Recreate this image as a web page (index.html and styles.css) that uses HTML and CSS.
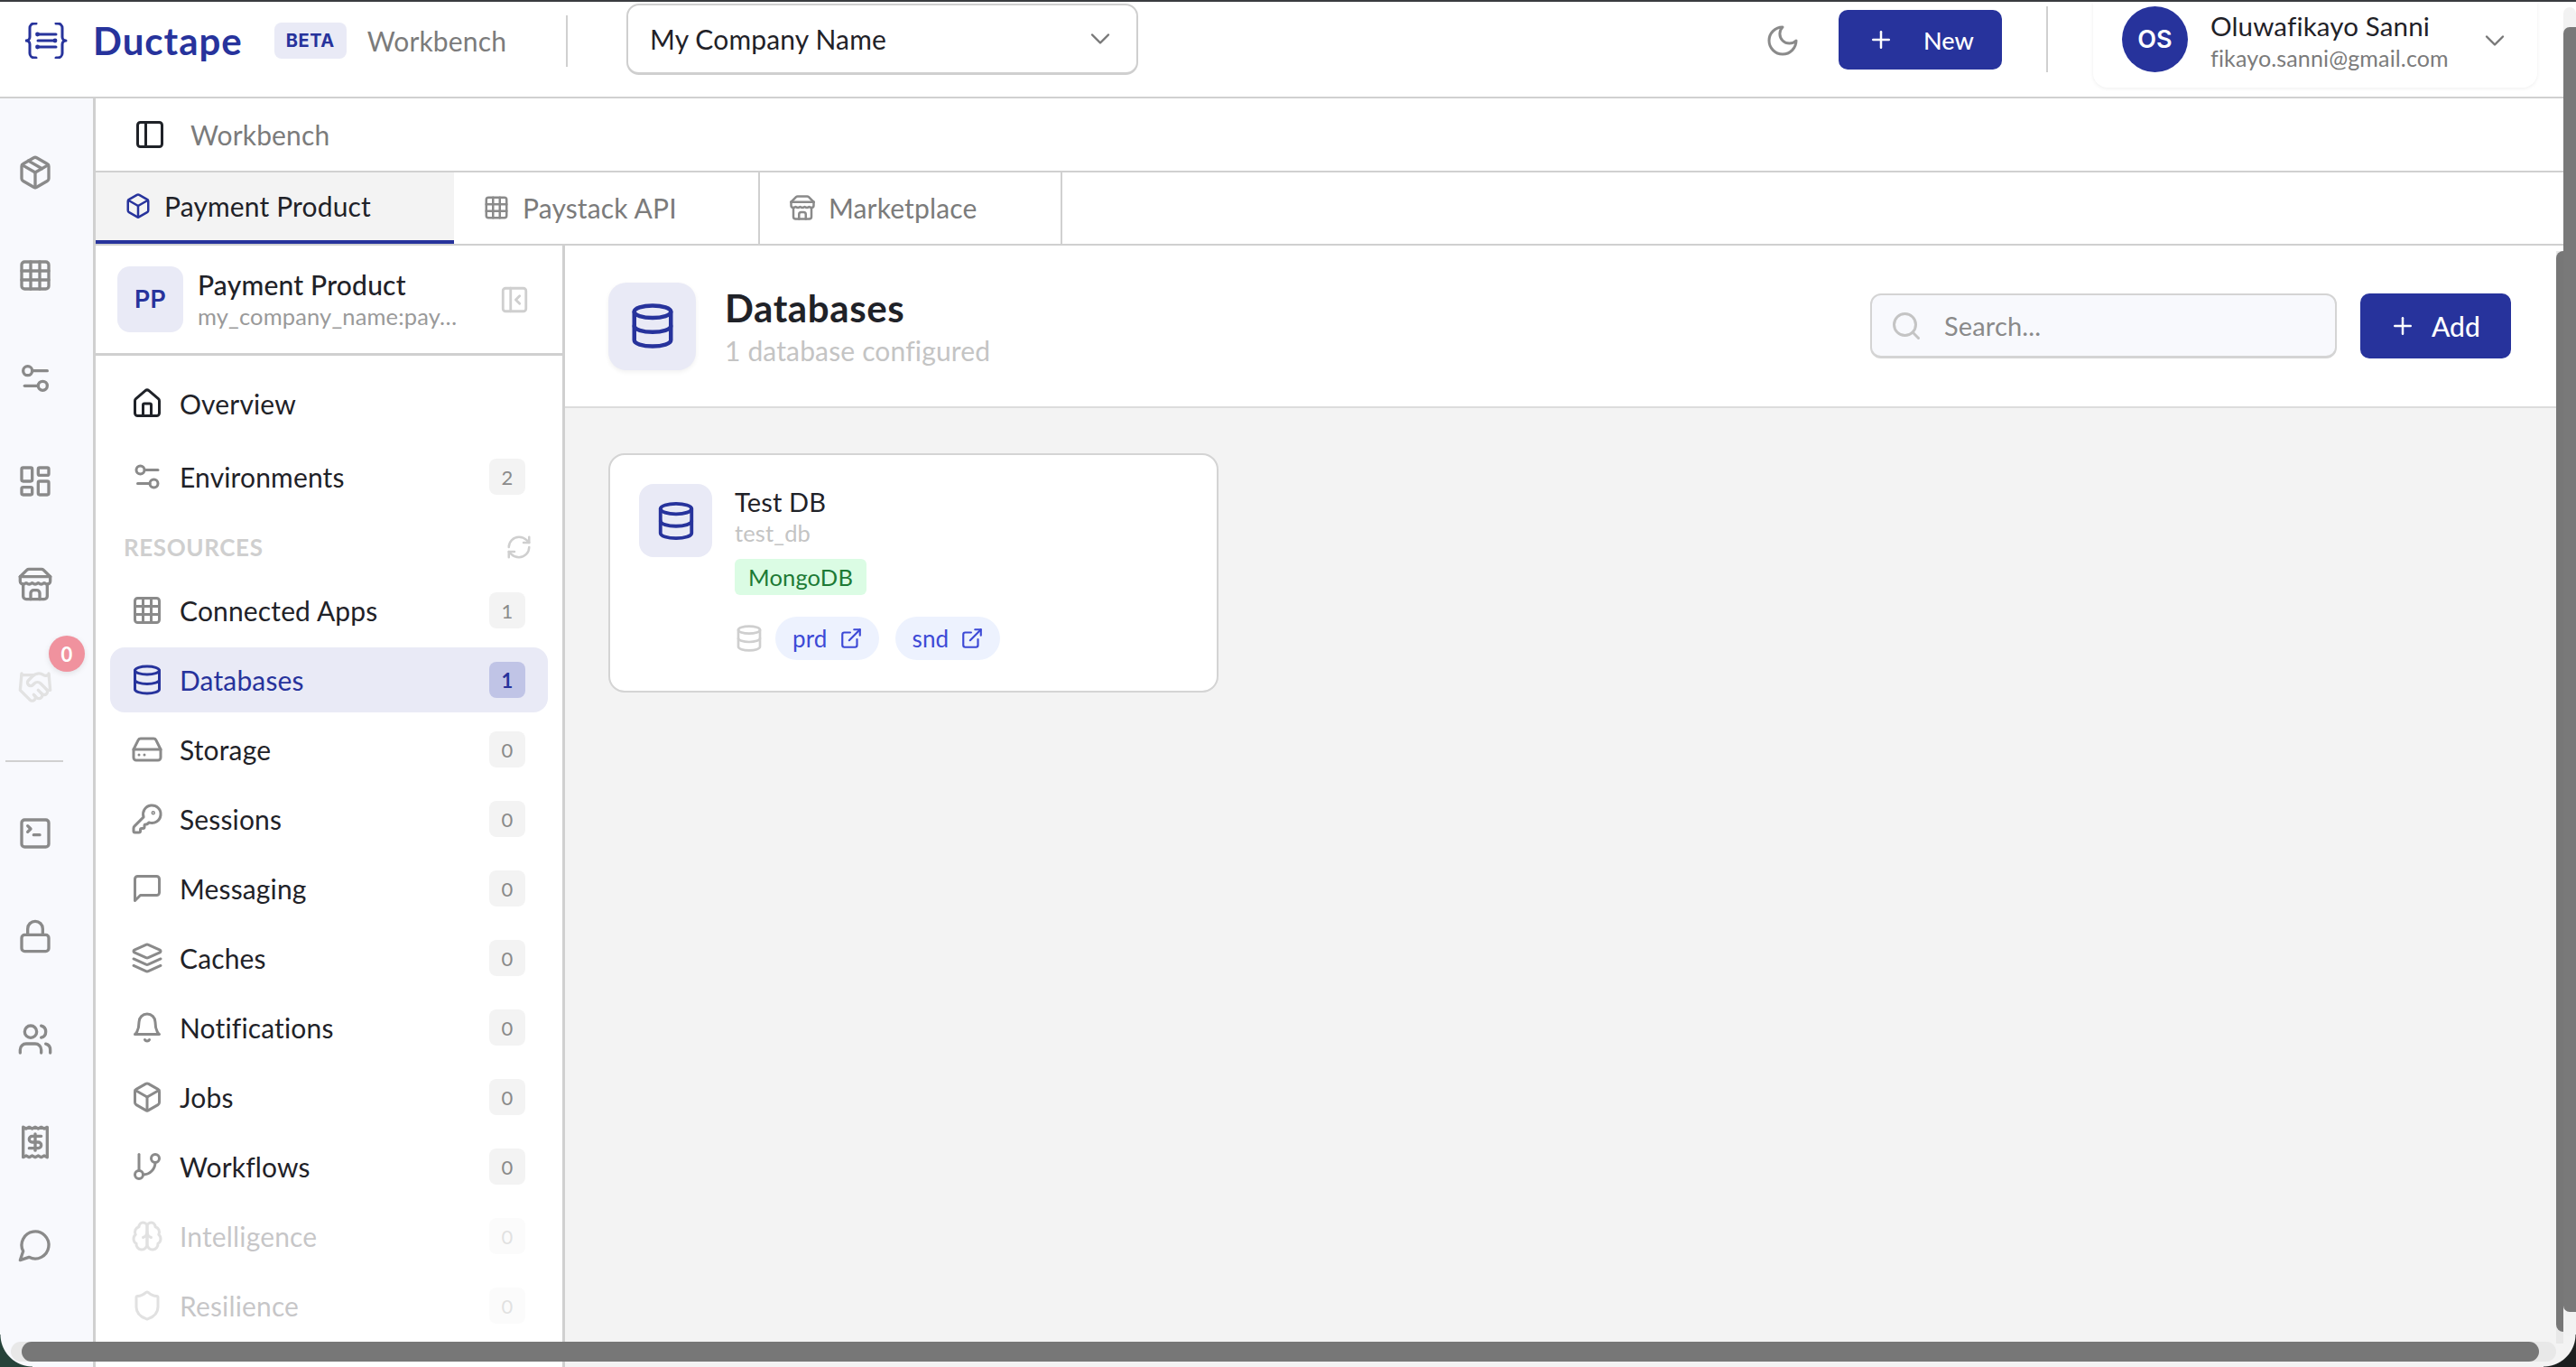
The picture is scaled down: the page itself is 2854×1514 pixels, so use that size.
FILE: index.html
```html
<!DOCTYPE html>
<html lang="en">
<head>
    <meta charset="UTF-8">
    <meta name="viewport" content="width=device-width, initial-scale=1.0">
    <title>Ductape Workbench</title>
    <link rel="stylesheet" href="styles.css">
</head>
<body>
    <svg class="sprite" xmlns="http://www.w3.org/2000/svg">
        <symbol id="i-package" viewBox="0 0 24 24"><path d="M21 8a2 2 0 0 0-1-1.73l-7-4a2 2 0 0 0-2 0l-7 4A2 2 0 0 0 3 8v8a2 2 0 0 0 1 1.73l7 4a2 2 0 0 0 2 0l7-4A2 2 0 0 0 21 16Z"/><path d="m3.3 7 8.7 5 8.7-5"/><path d="M12 22V12"/><path d="m7.5 4.27 9 5.15"/></symbol>
        <symbol id="i-box" viewBox="0 0 24 24"><path d="M21 8a2 2 0 0 0-1-1.73l-7-4a2 2 0 0 0-2 0l-7 4A2 2 0 0 0 3 8v8a2 2 0 0 0 1 1.73l7 4a2 2 0 0 0 2 0l7-4A2 2 0 0 0 21 16Z"/><path d="m3.3 7 8.7 5 8.7-5"/><path d="M12 22V12"/></symbol>
        <symbol id="i-grid" viewBox="0 0 24 24"><rect x="3" y="3" width="18" height="18" rx="2"/><path d="M3 9h18M3 15h18M9 3v18M15 3v18"/></symbol>
        <symbol id="i-sliders" viewBox="0 0 24 24"><path d="M20 7h-9"/><path d="M14 17H5"/><circle cx="17" cy="17" r="3"/><circle cx="7" cy="7" r="3"/></symbol>
        <symbol id="i-dash" viewBox="0 0 24 24"><rect x="3" y="3" width="7" height="9" rx="1"/><rect x="14" y="3" width="7" height="5" rx="1"/><rect x="14" y="12" width="7" height="9" rx="1"/><rect x="3" y="16" width="7" height="5" rx="1"/></symbol>
        <symbol id="i-store" viewBox="0 0 24 24"><path d="m2 7 4.41-4.41A2 2 0 0 1 7.83 2h8.34a2 2 0 0 1 1.42.59L22 7"/><path d="M4 12v8a2 2 0 0 0 2 2h12a2 2 0 0 0 2-2v-8"/><path d="M15 22v-4a2 2 0 0 0-2-2h-2a2 2 0 0 0-2 2v4"/><path d="M2 7h20"/><path d="M22 7v3a2 2 0 0 1-2 2a2.7 2.7 0 0 1-1.59-.63.7.7 0 0 0-.82 0A2.7 2.7 0 0 1 16 12a2.7 2.7 0 0 1-1.59-.63.7.7 0 0 0-.82 0A2.7 2.7 0 0 1 12 12a2.7 2.7 0 0 1-1.59-.63.7.7 0 0 0-.82 0A2.7 2.7 0 0 1 8 12a2.7 2.7 0 0 1-1.59-.63.7.7 0 0 0-.82 0A2.7 2.7 0 0 1 4 12a2 2 0 0 1-2-2V7"/></symbol>
        <symbol id="i-hand" viewBox="0 0 24 24"><path d="m11 17 2 2a1 1 0 1 0 3-3"/><path d="m14 14 2.5 2.5a1 1 0 1 0 3-3l-3.88-3.88a3 3 0 0 0-4.24 0l-.88.88a1 1 0 1 1-3-3l2.81-2.81a5.79 5.79 0 0 1 7.06-.87l.47.28a2 2 0 0 0 1.42.25L21 4"/><path d="m21 3 1 11h-2"/><path d="M3 3 2 14l6.5 6.5a1 1 0 1 0 3-3"/><path d="M3 4h8"/></symbol>
        <symbol id="i-term" viewBox="0 0 24 24"><path d="m7 11 2-2-2-2"/><path d="M11 13h4"/><rect x="3" y="3" width="18" height="18" rx="2"/></symbol>
        <symbol id="i-lock" viewBox="0 0 24 24"><rect x="3" y="11" width="18" height="11" rx="2"/><path d="M7 11V7a5 5 0 0 1 10 0v4"/></symbol>
        <symbol id="i-users" viewBox="0 0 24 24"><path d="M16 21v-2a4 4 0 0 0-4-4H6a4 4 0 0 0-4 4v2"/><circle cx="9" cy="7" r="4"/><path d="M22 21v-2a4 4 0 0 0-3-3.87"/><path d="M16 3.13a4 4 0 0 1 0 7.75"/></symbol>
        <symbol id="i-receipt" viewBox="0 0 24 24"><path d="M4 2v20l2-1 2 1 2-1 2 1 2-1 2 1 2-1 2 1V2l-2 1-2-1-2 1-2-1-2 1-2-1-2 1Z"/><path d="M16 8h-6a2 2 0 1 0 0 4h4a2 2 0 1 1 0 4H8"/><path d="M12 17.5v-11"/></symbol>
        <symbol id="i-chat" viewBox="0 0 24 24"><path d="M7.9 20A9 9 0 1 0 4 16.1L2 22Z"/></symbol>
        <symbol id="i-home" viewBox="0 0 24 24"><path d="M15 21v-8a1 1 0 0 0-1-1h-4a1 1 0 0 0-1 1v8"/><path d="M3 10a2 2 0 0 1 .709-1.528l7-5.999a2 2 0 0 1 2.582 0l7 5.999A2 2 0 0 1 21 10v9a2 2 0 0 1-2 2H5a2 2 0 0 1-2-2z"/></symbol>
        <symbol id="i-db" viewBox="0 0 24 24"><ellipse cx="12" cy="5" rx="9" ry="3"/><path d="M3 5V19A9 3 0 0 0 21 19V5"/><path d="M3 12A9 3 0 0 0 21 12"/></symbol>
        <symbol id="i-drive" viewBox="0 0 24 24"><path d="M22 12H2"/><path d="M5.45 5.11 2 12v6a2 2 0 0 0 2 2h16a2 2 0 0 0 2-2v-6l-3.45-6.89A2 2 0 0 0 16.76 4H7.24a2 2 0 0 0-1.79 1.11z"/><path d="M6 16h.01"/><path d="M10 16h.01"/></symbol>
        <symbol id="i-key" viewBox="0 0 24 24"><path d="M2.586 17.414A2 2 0 0 0 2 18.828V21a1 1 0 0 0 1 1h3a1 1 0 0 0 1-1v-1a1 1 0 0 1 1-1h1a1 1 0 0 0 1-1v-1a1 1 0 0 1 1-1h.172a2 2 0 0 0 1.414-.586l.814-.814a6.5 6.5 0 1 0-4-4z"/><circle cx="16.5" cy="7.5" r=".5"/></symbol>
        <symbol id="i-msg" viewBox="0 0 24 24"><path d="M21 15a2 2 0 0 1-2 2H7l-4 4V5a2 2 0 0 1 2-2h14a2 2 0 0 1 2 2z"/></symbol>
        <symbol id="i-layers" viewBox="0 0 24 24"><path d="m12.83 2.18a2 2 0 0 0-1.66 0L2.6 6.08a1 1 0 0 0 0 1.83l8.58 3.91a2 2 0 0 0 1.66 0l8.58-3.9a1 1 0 0 0 0-1.83Z"/><path d="m22 17.65-9.17 4.16a2 2 0 0 1-1.66 0L2 17.65"/><path d="m22 12.65-9.17 4.16a2 2 0 0 1-1.66 0L2 12.65"/></symbol>
        <symbol id="i-bell" viewBox="0 0 24 24"><path d="M6 8a6 6 0 0 1 12 0c0 7 3 9 3 9H3s3-2 3-9"/><path d="M10.3 21a1.94 1.94 0 0 0 3.4 0"/></symbol>
        <symbol id="i-branch" viewBox="0 0 24 24"><path d="M6 3v12"/><circle cx="18" cy="6" r="3"/><circle cx="6" cy="18" r="3"/><path d="M18 9a9 9 0 0 1-9 9"/></symbol>
        <symbol id="i-brain" viewBox="0 0 24 24"><path d="M12 5a3 3 0 1 0-5.997.125 4 4 0 0 0-2.526 5.77 4 4 0 0 0 .556 6.588A4 4 0 1 0 12 18Z"/><path d="M12 5a3 3 0 1 1 5.997.125 4 4 0 0 1 2.526 5.77 4 4 0 0 1-.556 6.588A4 4 0 1 1 12 18Z"/><path d="M15 13a4.5 4.5 0 0 1-3-4 4.5 4.5 0 0 1-3 4"/></symbol>
        <symbol id="i-shield" viewBox="0 0 24 24"><path d="M20 13c0 5-3.5 7.5-7.66 8.95a1 1 0 0 1-.67-.01C7.5 20.5 4 18 4 13V6a1 1 0 0 1 1-1c2 0 4.5-1.2 6.24-2.72a1.17 1.17 0 0 1 1.52 0C14.51 3.81 17 5 19 5a1 1 0 0 1 1 1z"/></symbol>
        <symbol id="i-refresh" viewBox="0 0 24 24"><path d="M3 12a9 9 0 0 1 9-9 9.75 9.75 0 0 1 6.74 2.74L21 8"/><path d="M21 3v5h-5"/><path d="M21 12a9 9 0 0 1-9 9 9.75 9.75 0 0 1-6.74-2.74L3 16"/><path d="M8 16H3v5"/></symbol>
        <symbol id="i-panel" viewBox="0 0 24 24"><rect x="3" y="3" width="18" height="18" rx="2"/><path d="M9 3v18"/></symbol>
        <symbol id="i-panel-close" viewBox="0 0 24 24"><rect x="3" y="3" width="18" height="18" rx="2"/><path d="M9 3v18"/><path d="m16 15-3-3 3-3"/></symbol>
        <symbol id="i-moon" viewBox="0 0 24 24"><path d="M12 3a6 6 0 0 0 9 9 9 9 0 1 1-9-9Z"/></symbol>
        <symbol id="i-link" viewBox="0 0 24 24"><path d="M15 3h6v6"/><path d="M10 14 21 3"/><path d="M18 13v6a2 2 0 0 1-2 2H5a2 2 0 0 1-2-2V8a2 2 0 0 1 2-2h6"/></symbol>
        <symbol id="i-search" viewBox="0 0 24 24"><circle cx="11" cy="11" r="8"/><path d="m21 21-4.3-4.3"/></symbol>
        <symbol id="i-plus" viewBox="0 0 24 24"><path d="M5 12h14"/><path d="M12 5v14"/></symbol>
        <symbol id="i-chevron" viewBox="0 0 24 24"><path d="m6 9 6 6 6-6"/></symbol>
        <symbol id="i-logo" viewBox="0 0 47 40"><path d="M12 1h-2a5 5 0 0 0-5 5v10a4 4 0 0 1-4 4 4 4 0 0 1 4 4v10a5 5 0 0 0 5 5h2"/><path d="M34 1h2a5 5 0 0 1 5 5v10a4 4 0 0 0 4 4 4 4 0 0 0-4 4v10a5 5 0 0 1-5 5h-2"/><path d="M14 13h20M14 20h19M14 27h20"/><circle class="logo-dot" cx="13.5" cy="13" r="2.4"/><circle class="logo-dot" cx="33" cy="20" r="2.4"/><circle class="logo-dot" cx="13.5" cy="27" r="2.4"/></symbol>
    </svg>

    <div class="app">
        <header class="topbar">
            <div class="brand">
                <svg class="brand-logo"><use href="#i-logo"/></svg>
                <span class="brand-name">Ductape</span>
                <span class="beta">BETA</span>
                <span class="brand-sub">Workbench</span>
            </div>
            <div class="top-divider"></div>
            <div class="company-select">
                <span>My Company Name</span>
                <svg class="icon chevron"><use href="#i-chevron"/></svg>
            </div>
            <div class="top-right">
                <svg class="icon moon"><use href="#i-moon"/></svg>
                <button class="btn btn-new"><svg class="icon"><use href="#i-plus"/></svg>New</button>
                <div class="top-divider second"></div>
                <div class="user-card">
                    <div class="avatar">OS</div>
                    <div class="user-info">
                        <div class="user-name">Oluwafikayo Sanni</div>
                        <div class="user-mail">fikayo.sanni@gmail.com</div>
                    </div>
                    <svg class="icon chevron"><use href="#i-chevron"/></svg>
                </div>
            </div>
        </header>

        <div class="shell">
            <nav class="rail">
                <a class="rail-item"><svg class="icon"><use href="#i-package"/></svg></a>
                <a class="rail-item"><svg class="icon"><use href="#i-grid"/></svg></a>
                <a class="rail-item"><svg class="icon"><use href="#i-sliders"/></svg></a>
                <a class="rail-item"><svg class="icon"><use href="#i-dash"/></svg></a>
                <a class="rail-item"><svg class="icon"><use href="#i-store"/></svg></a>
                <a class="rail-item faded"><svg class="icon"><use href="#i-hand"/></svg><span class="rail-badge">0</span></a>
                <div class="rail-divider"></div>
                <a class="rail-item"><svg class="icon"><use href="#i-term"/></svg></a>
                <a class="rail-item"><svg class="icon"><use href="#i-lock"/></svg></a>
                <a class="rail-item"><svg class="icon"><use href="#i-users"/></svg></a>
                <a class="rail-item"><svg class="icon"><use href="#i-receipt"/></svg></a>
                <a class="rail-item"><svg class="icon"><use href="#i-chat"/></svg></a>
            </nav>

            <div class="workspace">
                <div class="crumb">
                    <svg class="icon"><use href="#i-panel"/></svg>
                    <span>Workbench</span>
                </div>
                <div class="tabs">
                    <div class="tab active"><svg class="icon"><use href="#i-box"/></svg>Payment Product</div>
                    <div class="tab second"><svg class="icon"><use href="#i-grid"/></svg>Paystack API</div>
                    <div class="tab third"><svg class="icon"><use href="#i-store"/></svg>Marketplace</div>
                </div>
                <div class="columns">
                    <aside class="sidebar">
                        <div class="side-head">
                            <div class="side-logo">PP</div>
                            <div class="side-title">
                                <div class="side-name">Payment Product</div>
                                <div class="side-slug">my_company_name:pay…</div>
                            </div>
                            <svg class="icon side-collapse"><use href="#i-panel-close"/></svg>
                        </div>
                        <ul class="side-list">
                            <li class="side-item first"><svg class="icon dark"><use href="#i-home"/></svg><span>Overview</span></li>
                            <li class="side-item"><svg class="icon"><use href="#i-sliders"/></svg><span>Environments</span><b class="count">2</b></li>
                            <li class="side-label"><span>RESOURCES</span><svg class="icon"><use href="#i-refresh"/></svg></li>
                            <li class="side-item"><svg class="icon"><use href="#i-grid"/></svg><span>Connected Apps</span><b class="count">1</b></li>
                            <li class="side-item active"><svg class="icon"><use href="#i-db"/></svg><span>Databases</span><b class="count">1</b></li>
                            <li class="side-item"><svg class="icon"><use href="#i-drive"/></svg><span>Storage</span><b class="count">0</b></li>
                            <li class="side-item"><svg class="icon"><use href="#i-key"/></svg><span>Sessions</span><b class="count">0</b></li>
                            <li class="side-item"><svg class="icon"><use href="#i-msg"/></svg><span>Messaging</span><b class="count">0</b></li>
                            <li class="side-item"><svg class="icon"><use href="#i-layers"/></svg><span>Caches</span><b class="count">0</b></li>
                            <li class="side-item"><svg class="icon"><use href="#i-bell"/></svg><span>Notifications</span><b class="count">0</b></li>
                            <li class="side-item"><svg class="icon"><use href="#i-box"/></svg><span>Jobs</span><b class="count">0</b></li>
                            <li class="side-item"><svg class="icon"><use href="#i-branch"/></svg><span>Workflows</span><b class="count">0</b></li>
                            <li class="side-item disabled"><svg class="icon"><use href="#i-brain"/></svg><span>Intelligence</span><b class="count">0</b></li>
                            <li class="side-item disabled"><svg class="icon"><use href="#i-shield"/></svg><span>Resilience</span><b class="count">0</b></li>
                        </ul>
                    </aside>

                    <main class="content">
                        <div class="content-head">
                            <div class="head-icon"><svg class="icon"><use href="#i-db"/></svg></div>
                            <div class="head-text">
                                <h1>Databases</h1>
                                <p>1 database configured</p>
                            </div>
                            <div class="search">
                                <svg class="icon"><use href="#i-search"/></svg>
                                <span>Search...</span>
                            </div>
                            <button class="btn btn-add"><svg class="icon"><use href="#i-plus"/></svg>Add</button>
                        </div>
                        <div class="content-body">
                            <div class="db-card">
                                <div class="db-icon"><svg class="icon"><use href="#i-db"/></svg></div>
                                <div class="db-info">
                                    <div class="db-name">Test DB</div>
                                    <div class="db-slug">test_db</div>
                                    <span class="db-type">MongoDB</span>
                                    <div class="db-envs">
                                        <svg class="icon"><use href="#i-db"/></svg>
                                        <a class="env-pill">prd<svg class="icon"><use href="#i-link"/></svg></a>
                                        <a class="env-pill">snd<svg class="icon"><use href="#i-link"/></svg></a>
                                    </div>
                                </div>
                            </div>
                        </div>
                    </main>
                </div>
            </div>
        </div>

        <!-- overlay scrollbars and window corners -->
        <div class="track-v outer"><div class="thumb"></div></div>
        <div class="track-v inner"><div class="thumb"></div></div>
        <div class="track-h"><div class="thumb"></div></div>
        <div class="corner left"></div>
        <div class="corner right"></div>
    </div>
</body>
</html>
```

FILE: styles.css
```css
html, body {
    margin: 0;
    padding: 0;
    height: 100%;
    background-color: #fff;
    font-family: "Lato", "Open Sans", sans-serif;
    color: #1f2228;
    letter-spacing: 0.15px;
    overflow: hidden;
}

.sprite {
    display: none;
}

.icon {
    width: 30px;
    height: 30px;
    flex: none;
    fill: none;
    stroke: #8a8a8a;
    stroke-width: 2;
    stroke-linecap: round;
    stroke-linejoin: round;
}

.icon.dark {
    stroke: #1f2228;
}

button {
    font-family: inherit;
    border: none;
}

.app {
    position: relative;
    width: 2854px;
    height: 1514px;
    overflow: hidden;
    display: flex;
    flex-direction: column;
    border-top: 2px solid #3a3c40;
    box-sizing: border-box;
}

/* top bar */
.topbar {
    height: 105px;
    flex: none;
    display: flex;
    align-items: center;
    border-bottom: 2px solid #d0d0d0;
    position: relative;
}

.brand {
    display: flex;
    align-items: center;
    width: 627px;
    margin-top: -20px;
}

.brand-logo {
    width: 47px;
    height: 40px;
    margin-left: 28px;
    fill: none;
    stroke: #27339c;
    stroke-width: 3;
    stroke-linecap: round;
    stroke-linejoin: round;
}

.logo-dot {
    fill: #27339c;
    stroke: none;
}

.brand-name {
    font-size: 42px;
    font-weight: 700;
    letter-spacing: 1px;
    color: #27339c;
    margin-left: 28px;
}

.beta {
    font-size: 20px;
    font-weight: 700;
    color: #27339c;
    background-color: #e9eaf6;
    border-radius: 8px;
    padding: 8px 13px;
    margin-left: 35px;
    font-family: "Inter", sans-serif;
    letter-spacing: 0.5px;
}

.brand-sub {
    font-size: 30px;
    color: #7b7b7b;
    margin-left: 23px;
}

.top-divider {
    width: 2px;
    height: 57px;
    background-color: #d0d0d0;
    flex: none;
    margin-top: -18px;
}

.company-select {
    width: 567px;
    height: 79px;
    margin-left: 65px;
    margin-top: -23px;
    box-sizing: border-box;
    border: 2px solid #cfcfcf;
    border-bottom-width: 3px;
    border-radius: 14px;
    display: flex;
    align-items: center;
    justify-content: space-between;
    padding: 0 22px 0 24px;
    font-size: 30px;
}

.chevron {
    width: 36px;
    height: 36px;
    stroke: #777;
    stroke-width: 1.6;
}

.top-right {
    margin-left: auto;
    align-self: flex-start;
    display: flex;
    align-items: flex-start;
}

.moon {
    width: 40px;
    height: 40px;
    stroke-width: 1.8;
    margin: 23px 42px 0 0;
}

.btn {
    background-color: #27339c;
    color: #fff;
    border-radius: 10px;
    display: flex;
    align-items: center;
}

.btn .icon {
    stroke: #fff;
}

.btn-new {
    width: 181px;
    height: 66px;
    margin-top: 9px;
    font-size: 27px;
    font-weight: 500;
    padding: 0 0 0 32px;
    gap: 32px;
}

.top-divider.second {
    height: 73px;
    margin: 5px 0 0 49px;
}

.user-card {
    width: 492px;
    height: 95px;
    margin: 0 43px 0 50px;
    box-sizing: border-box;
    border-radius: 0 0 16px 16px;
    box-shadow: 0 1px 4px rgba(0, 0, 0, 0.07);
    display: flex;
    align-items: flex-start;
    padding: 5px 29px 0 32px;
}

.avatar {
    width: 73px;
    height: 73px;
    border-radius: 50%;
    background-color: #27339c;
    color: #fff;
    font-family: "Inter", sans-serif;
    font-weight: 600;
    font-size: 27px;
    display: flex;
    align-items: center;
    justify-content: center;
    flex: none;
}

.user-info {
    margin: 3px 0 0 25px;
    flex: 1;
}

.user-name {
    font-size: 29.5px;
    line-height: 37px;
}

.user-mail {
    font-size: 25px;
    line-height: 35px;
    color: #7b7b7b;
}

.user-card .chevron {
    margin-top: 20px;
}

/* app shell */
.shell {
    flex: 1;
    display: flex;
    min-height: 0;
}

.rail {
    width: 103px;
    flex: none;
    background-color: #f8f9fd;
    border-right: 3px solid #d0d0d0;
    padding-top: 25px;
    display: flex;
    flex-direction: column;
}

.rail-item {
    position: relative;
    height: 114px;
    box-sizing: border-box;
    padding-right: 25px;
    display: flex;
    align-items: center;
    justify-content: center;
    flex: none;
}

.rail-item .icon {
    width: 40px;
    height: 40px;
}

.rail-item.faded .icon {
    stroke: #e2e2e2;
}

.rail-badge {
    position: absolute;
    top: 0;
    left: 54px;
    width: 40px;
    height: 40px;
    border-radius: 50%;
    background-color: #f0929e;
    color: #fff;
    font-size: 22px;
    font-weight: 700;
    display: flex;
    align-items: center;
    justify-content: center;
    box-shadow: 0 2px 6px rgba(0, 0, 0, 0.1);
}

.rail-divider {
    width: 64px;
    height: 2px;
    background-color: #d0d0d0;
    margin: 24px 0 22px 6px;
    flex: none;
}

.workspace {
    flex: 1;
    min-width: 0;
    display: flex;
    flex-direction: column;
}

.crumb {
    height: 80px;
    flex: none;
    border-bottom: 2px solid #d0d0d0;
    display: flex;
    align-items: center;
    padding-left: 42px;
    gap: 27px;
    font-size: 30px;
    color: #7b7b7b;
}

.crumb .icon {
    width: 36px;
    height: 36px;
    stroke: #1f2228;
}

.tabs {
    height: 79px;
    flex: none;
    display: flex;
    border-bottom: 2px solid #d0d0d0;
}

.tab {
    display: flex;
    align-items: center;
    gap: 14px;
    box-sizing: border-box;
    border-right: 2px solid #d0d0d0;
    font-size: 30px;
    color: #7b7b7b;
    padding: 0 0 2px 32px;
}

.tab .icon {
    width: 30px;
    height: 30px;
}

.tab.active {
    width: 397px;
    background-color: #f3f3f3;
    border-bottom: 4px solid #27339c;
    border-right: none;
    color: #1f2228;
}

.tab.active .icon {
    stroke: #27339c;
}

.tab.second {
    width: 339px;
}

.tab.third {
    width: 335px;
}

.columns {
    flex: 1;
    display: flex;
    min-height: 0;
}

/* sidebar */
.sidebar {
    width: 517px;
    flex: none;
    border-right: 3px solid #d0d0d0;
    overflow: hidden;
}

.side-head {
    height: 122px;
    box-sizing: border-box;
    border-bottom: 3px solid #d0d0d0;
    display: flex;
    align-items: center;
    padding: 0 36px 0 24px;
}

.side-logo {
    width: 73px;
    height: 73px;
    border-radius: 14px;
    background-color: #e9eaf6;
    color: #27339c;
    font-family: "Inter", sans-serif;
    font-weight: 600;
    font-size: 27px;
    display: flex;
    align-items: center;
    justify-content: center;
    flex: none;
}

.side-title {
    flex: 1;
    margin-left: 16px;
    min-width: 0;
}

.side-name {
    font-size: 30px;
    font-weight: 500;
    letter-spacing: 0.2px;
    line-height: 38px;
}

.side-slug {
    font-size: 25.5px;
    line-height: 33px;
    color: #9a9a9a;
    white-space: nowrap;
}

.side-collapse {
    width: 34px;
    height: 34px;
    stroke: #cfcfcf;
}

.side-list {
    list-style: none;
    margin: 0;
    padding: 17px 16px 0;
}

.side-item {
    height: 72px;
    margin-bottom: 5px;
    border-radius: 16px;
    display: flex;
    align-items: center;
    padding: 0 25px 0 23px;
    font-size: 30px;
}

.side-item.first {
    margin-bottom: 9px;
}

.side-item .icon {
    width: 36px;
    height: 36px;
}

.side-item span {
    flex: 1;
    margin-left: 18px;
}

.count {
    width: 40px;
    height: 40px;
    border-radius: 8px;
    background-color: #f3f3f3;
    color: #8a8a8a;
    font-size: 22px;
    font-weight: 400;
    display: flex;
    align-items: center;
    justify-content: center;
}

.side-item.active {
    background-color: #e9eaf6;
    color: #27339c;
}

.side-item.active .icon {
    stroke: #27339c;
}

.side-item.active .count {
    background-color: #c0c4e6;
    color: #27339c;
    font-weight: 700;
}

.side-item.disabled {
    opacity: 0.25;
}

.side-label {
    height: 71px;
    display: flex;
    align-items: center;
    justify-content: space-between;
    padding: 2px 17px 0 15px;
    box-sizing: border-box;
    font-size: 26px;
    font-weight: 700;
    color: #cfcfcf;
    letter-spacing: 0.6px;
}

.side-label .icon {
    width: 30px;
    height: 30px;
    stroke: #cfcfcf;
}

/* content */
.content {
    flex: 1;
    min-width: 0;
    display: flex;
    flex-direction: column;
    background-color: #f3f3f3;
}

.content-head {
    height: 178px;
    flex: none;
    background-color: #fff;
    border-bottom: 2px solid #dcdcdc;
    display: flex;
    align-items: center;
    padding: 0 72px 0 48px;
}

.head-icon {
    width: 97px;
    height: 97px;
    border-radius: 20px;
    background-color: #e9eaf6;
    box-shadow: 0 2px 5px rgba(0, 0, 0, 0.06);
    display: flex;
    align-items: center;
    justify-content: center;
    flex: none;
}

.head-icon .icon {
    width: 54px;
    height: 54px;
    stroke: #27339c;
}

.head-text {
    margin-left: 32px;
    flex: 1;
}

.head-text h1 {
    margin: 0;
    font-size: 42px;
    line-height: 48px;
    font-weight: 700;
    letter-spacing: 0.6px;
}

.head-text p {
    margin: 5px 0 0;
    font-size: 30px;
    line-height: 36px;
    color: #c4c4c4;
}

.search {
    width: 517px;
    height: 72px;
    box-sizing: border-box;
    border: 2px solid #d4d4d4;
    border-bottom-width: 3px;
    border-radius: 12px;
    background-color: #f8f9fd;
    display: flex;
    align-items: center;
    padding-left: 20px;
    gap: 24px;
    font-size: 29px;
    color: #8a8a8a;
    margin-right: 26px;
}

.search .icon {
    width: 36px;
    height: 36px;
    stroke: #c4c4c4;
}

.btn-add {
    width: 167px;
    height: 72px;
    font-size: 30px;
    font-weight: 500;
    padding: 0 0 0 32px;
    gap: 17px;
}

.content-body {
    flex: 1;
    padding: 50px 48px;
}

.db-card {
    width: 676px;
    height: 265px;
    box-sizing: border-box;
    background-color: #fff;
    border: 2px solid #d4d4d4;
    border-radius: 18px;
    padding: 32px;
    display: flex;
}

.db-icon {
    width: 81px;
    height: 81px;
    border-radius: 16px;
    background-color: #e9eaf6;
    display: flex;
    align-items: center;
    justify-content: center;
    flex: none;
}

.db-icon .icon {
    width: 46px;
    height: 46px;
    stroke: #27339c;
}

.db-info {
    margin-left: 25px;
}

.db-name {
    font-size: 29px;
    line-height: 40px;
}

.db-slug {
    font-size: 25.5px;
    line-height: 28px;
    color: #c4c4c4;
}

.db-type {
    display: inline-block;
    margin-top: 15px;
    background-color: #dbfce4;
    color: #1d7a35;
    font-size: 25.5px;
    line-height: 40px;
    border-radius: 6px;
    padding: 0 15px;
}

.db-envs {
    display: flex;
    align-items: center;
    margin-top: 24px;
}

.db-envs > .icon {
    width: 32px;
    height: 32px;
    stroke: #cfcfcf;
}

.env-pill {
    height: 48px;
    border-radius: 24px;
    background-color: #edf2fe;
    color: #3d4ad6;
    font-size: 26px;
    display: flex;
    align-items: center;
    gap: 13px;
    padding: 0 18px 0 19px;
    margin-left: 18px;
}

.db-envs > .icon + .env-pill {
    margin-left: 13px;
}

.env-pill .icon {
    width: 26px;
    height: 26px;
    stroke: #3d4ad6;
}

/* overlay scrollbars */
.track-v,
.track-h {
    position: absolute;
}

.thumb {
    background-color: rgba(90, 90, 90, 0.8);
    height: 100%;
}

.track-v.outer {
    left: 2840px;
    top: 6px;
    width: 14px;
    height: 1472px;
    background-color: #f2f2f2;
    border-radius: 7px;
}

.track-v.outer .thumb {
    margin-top: 22px;
    height: 1423px;
    border-radius: 7px 0 0 7px;
}

.track-v.inner {
    left: 2832px;
    top: 276px;
    width: 8px;
    height: 1210px;
    background-color: #e8e8e8;
}

.track-v.inner .thumb {
    height: 1197px;
    border-radius: 8px 0 0 8px;
}

.track-h {
    left: 12px;
    top: 1484px;
    width: 2820px;
    height: 22px;
    background-color: #e8e8e8;
    border-radius: 11px;
}

.track-h .thumb {
    margin-left: 12px;
    width: 2789px;
    border-radius: 11px;
}

.corner {
    position: absolute;
    bottom: 0;
    width: 36px;
    height: 36px;
}

.corner.left {
    left: 0;
    background: radial-gradient(circle at 100% 0, transparent 35px, #26433a 36px);
}

.corner.right {
    right: 0;
    background: radial-gradient(circle at 0 0, transparent 35px, #1b1f1f 36px);
}
```
